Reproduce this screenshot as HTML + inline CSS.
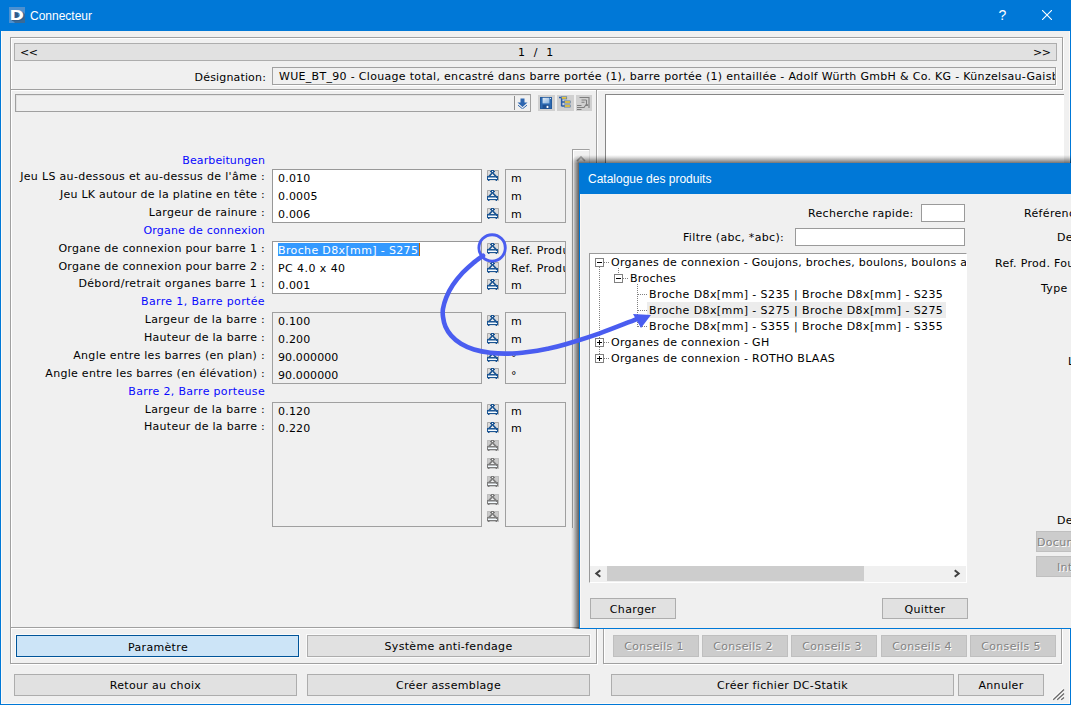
<!DOCTYPE html>
<html lang="fr"><head><meta charset="utf-8"><title>Connecteur</title>
<style>
html,body{margin:0;padding:0}
body{width:1071px;height:705px;overflow:hidden;position:relative;background:#f0f0f0;font-family:"DejaVu Sans","Liberation Sans",sans-serif;font-size:11px;color:#000}
div,span,svg{position:absolute;box-sizing:border-box}
.t{white-space:nowrap;line-height:14px;font-size:11px;letter-spacing:.33px}
.seg{font-family:"Liberation Sans",sans-serif;font-size:12px;line-height:16px;letter-spacing:0}
.blue{color:#0808ff}
.groove{border:1px solid #a0a0a0;box-shadow:1px 1px 0 #fff,inset 1px 1px 0 #fff}
.hline{height:2px;border-top:1px solid #a0a0a0;background:#fff}
.vline{width:2px;border-left:1px solid #a0a0a0;background:#fff}
.btn{background:#e1e1e1;border:1px solid #adadad}
.btnd{background:#cccccc;border:1px solid #bfbfbf}
.bt{white-space:nowrap;line-height:14px;font-size:11px;letter-spacing:.33px;left:0;right:0;text-align:center}
.dis{color:#838383;text-shadow:1px 1px 0 #fff}
.edit{background:#fff;border:1px solid #9a9a9a}
.box{background:#f0f0f0;border:1px solid #a0a0a0}
.ro{background:#f0f0f0;border:1px solid #a0a0a0}
</style></head><body>

<div style="left:0;top:0;width:1071px;height:31px;background:#0078d7"></div>
<div style="left:0;top:0;width:1px;height:705px;background:#0078d7"></div>
<div style="left:1070px;top:0;width:1px;height:705px;background:#0078d7"></div>
<div style="left:0;top:704px;width:1071px;height:1px;background:#0078d7"></div>
<div style="left:1px;top:703px;width:1069px;height:1px;background:#fdfaf7"></div>
<div style="left:1px;top:31px;width:1px;height:673px;background:#fdfaf7"></div>
<div style="left:1069px;top:31px;width:1px;height:673px;background:#fdfaf7"></div>
<svg style="left:9px;top:7px" width="16" height="16" viewBox="0 0 16 16"><rect width="16" height="16" fill="#4c90d0"/><path d="M3 13 L14 5 L16 7 V16 H6 Z" fill="#3a6a96"/><rect x="4.6" y="5.4" width="4.6" height="5.4" fill="#2b5a8a"/><text transform="translate(1.4 13.8) scale(1.27 1)" font-family="DejaVu Sans, sans-serif" font-weight="bold" font-size="13.7" fill="#2f5f8f">D</text><text transform="translate(.5 13) scale(1.27 1)" font-family="DejaVu Sans, sans-serif" font-weight="bold" font-size="13.7" fill="#fff">D</text></svg>
<span class="t seg" style="left:30px;top:8px;color:#fff">Connecteur</span>
<span class="t seg" style="left:998.5px;top:7px;color:#fff;font-size:14px">?</span>
<svg style="left:1042px;top:10px" width="10" height="10" viewBox="0 0 10 10"><path d="M0 0L10 10M10 0L0 10" stroke="#fff" stroke-width="1.1" fill="none"/></svg>
<div class="groove" style="left:10px;top:37px;width:1053px;height:53px"></div>
<div class="groove" style="left:10px;top:89px;width:587px;height:575px"></div>
<div class="hline" style="left:11px;top:627px;width:585px"></div>
<div class="groove" style="left:603px;top:628px;width:459px;height:36px;border-top:none"></div>
<div class="btn" style="left:14px;top:43px;width:1043px;height:18px"></div>
<span class="t " style="left:20px;top:46px;letter-spacing:-.5px">&lt;&lt;</span>
<span class="t " style="left:518px;top:46px;letter-spacing:.6px">1&nbsp; /&nbsp; 1</span>
<span class="t " style="left:1033px;top:46px;letter-spacing:-.5px">&gt;&gt;</span>
<span class="t " style="right:805px;top:71px;letter-spacing:.16px">Désignation:</span>
<div class="ro" style="left:272px;top:67px;width:784px;height:18px;overflow:hidden;box-shadow:1px 1px 0 #fff"><span class="t" style="left:6px;top:2px;letter-spacing:.31px">WUE_BT_90 - Clouage total, encastré dans barre portée (1), barre portée (1) entaillée - Adolf Würth GmbH &amp; Co. KG - Künzelsau-Gaisbach</span></div>
<div class="ro" style="left:15px;top:94px;width:516px;height:18px;box-shadow:inset 1px 1px 0 #e3e3e3"></div>
<div style="left:514px;top:96px;width:1px;height:14px;background:#8c8c8c"></div>
<svg style="left:517px;top:98px" width="11" height="11" viewBox="0 0 11 11"><path d="M3.5 0.5h4v4h3L5.5 9 0.5 4.5h3z" fill="#2d66b0"/><path d="M1 7.2L5.5 10.8 10 7.2" stroke="#2d66b0" stroke-width="1" fill="none"/></svg>
<div style="left:538px;top:95px;width:17px;height:16px;background:#d0d0d0"></div>
<div style="left:557px;top:95px;width:17px;height:16px;background:#d0d0d0"></div>
<div style="left:576px;top:95px;width:16px;height:16px;background:#d0d0d0"></div>
<svg style="left:540px;top:97px" width="12" height="12" viewBox="0 0 12 12"><defs><linearGradient id="sv" x1="0" y1="0" x2="1" y2="1"><stop offset="0" stop-color="#e4eef8"/><stop offset="1" stop-color="#86b0dc"/></linearGradient></defs><rect x=".5" y=".5" width="11" height="11" fill="#2d6ab2" stroke="#245a9c"/><rect x="2.6" y="0.8" width="6.8" height="5.6" fill="url(#sv)"/><rect x="10" y="1" width="1" height="1" fill="#dce8f4"/><rect x="2.6" y="7.8" width="6.8" height="4" fill="#1f4f90"/><rect x="6.6" y="8.8" width="1.8" height="2.2" fill="#fff"/></svg>
<svg style="left:558px;top:96px" width="14" height="13" viewBox="0 0 14 13"><path d="M1 1.6h2.5M3.6 2v8.2M3.6 6h3M3.6 10h3" stroke="#2a5ca8" stroke-width="1.5" fill="none"/><rect x="3.6" y="0.8" width="5.2" height="2.2" fill="#f2cc3c" stroke="#2a5ca8" stroke-width=".5"/><rect x="6.6" y="4.9" width="5.6" height="2.2" fill="#f2cc3c" stroke="#2a5ca8" stroke-width=".5"/><rect x="6.6" y="8.9" width="5.6" height="2.2" fill="#f2cc3c" stroke="#2a5ca8" stroke-width=".5"/></svg>
<svg style="left:576px;top:96px" width="15" height="15" viewBox="0 0 15 15"><path d="M3.5 1.5h9.5v10.5M5.5 4h5M5.5 6.2h3M10.5 4v6M1 9.5h4.5M1 11.5h4.5M1 13.5h4.5M5.5 11.5h2.5l2.5-3.5 1.5 1.5" stroke="#7e7e7e" stroke-width="1.1" fill="none"/></svg>
<div style="left:572px;top:149px;width:18px;height:379px;border:1px solid #a0a0a0;border-right-color:#dcdcdc;border-bottom:none;box-shadow:inset 1px 1px 0 #fff;background:#f0f0f0"></div>
<svg style="left:576px;top:155px" width="10" height="7" viewBox="0 0 10 7"><path d="M1 6L5 2 9 6" stroke="#a8a8a8" stroke-width="1.6" fill="none"/></svg>
<div style="left:605px;top:94px;width:459px;height:520px;background:#fff;border:1px solid #868686;border-right:none"></div>
<span class="t blue" style="right:806px;top:154px;letter-spacing:0.1px">Bearbeitungen</span>
<span class="t " style="right:806px;top:170px;letter-spacing:0.33px">Jeu LS au-dessous et au-dessus de l'âme :</span>
<span class="t " style="right:806px;top:188px;letter-spacing:0.255px">Jeu LK autour de la platine en tête :</span>
<span class="t " style="right:806px;top:206px;letter-spacing:0.33px">Largeur de rainure :</span>
<span class="t blue" style="right:806px;top:224px;letter-spacing:0.2px">Organe de connexion</span>
<span class="t " style="right:806px;top:242px;letter-spacing:0.29px">Organe de connexion pour barre 1 :</span>
<span class="t " style="right:806px;top:260px;letter-spacing:0.29px">Organe de connexion pour barre 2 :</span>
<span class="t " style="right:806px;top:277px;letter-spacing:0.33px">Débord/retrait organes barre 1 :</span>
<span class="t blue" style="right:806px;top:295px;letter-spacing:0.36px">Barre 1, Barre portée</span>
<span class="t " style="right:806px;top:313px;letter-spacing:0.357px">Largeur de la barre :</span>
<span class="t " style="right:806px;top:331px;letter-spacing:0.29px">Hauteur de la barre :</span>
<span class="t " style="right:806px;top:349px;letter-spacing:0.3px">Angle entre les barres (en plan) :</span>
<span class="t " style="right:806px;top:367px;letter-spacing:0.28px">Angle entre les barres (en élévation) :</span>
<span class="t blue" style="right:806px;top:385px;letter-spacing:0.33px">Barre 2, Barre porteuse</span>
<span class="t " style="right:806px;top:403px;letter-spacing:0.357px">Largeur de la barre :</span>
<span class="t " style="right:806px;top:420px;letter-spacing:0.29px">Hauteur de la barre :</span>
<div style="left:272px;top:169px;width:210px;height:54px;background:#fff;border:1px solid #989898"></div>
<div style="left:505px;top:169px;width:61px;height:54px;background:#f0f0f0;border:1px solid #a0a0a0;overflow:hidden"></div>
<span class="t " style="left:278px;top:172px;letter-spacing:0.19px">0.010</span>
<div style="left:506px;top:170px;width:59px;height:16px;overflow:hidden"><span class="t" style="left:5px;top:2px">m</span></div>
<svg class="ic" style="left:487px;top:170px" width="12" height="11" viewBox="0 0 12 11"><rect width="12" height="11" fill="#dcdcdc"/><path d="M.5 6.5V.5H11.5V10.5" stroke="#aaaaaa" fill="none"/><rect x="4" y="0" width="3" height="1" fill="#1b5593"/><rect x="3" y="1" width="5" height="1.1" fill="#1b5593"/><rect x="4.1" y="2" width="2.8" height="1.6" fill="#1b5593"/><rect x="5" y="1" width="1" height="1" fill="#f2f2f2"/><path d="M5 3.2 L2 6.4 M6 3.2 L9 6.4" fill="none" stroke="#1b5593" stroke-width="1.6"/><path d="M5.5 4.3 L3.9 6.1 H7.1 Z" fill="#f1f1f1"/><rect x="0" y="6" width="11" height="4" fill="#1b5593"/><path d="M1 9 V8 L1.2 7.9 2 6.8 2.8 7.9 3.2 7.9 4 6.8 4.8 7.9 5.2 7.9 6 6.8 6.8 7.9 7.2 7.9 8 6.8 8.8 7.9 10 8 V9 Z" fill="#f4fafe"/><rect x="1" y="10" width="1.5" height="1" fill="#1b5593"/><rect x="8.6" y="10" width="1.5" height="1" fill="#1b5593"/></svg>
<span class="t " style="left:278px;top:190px;letter-spacing:0.19px">0.0005</span>
<div style="left:506px;top:188px;width:59px;height:16px;overflow:hidden"><span class="t" style="left:5px;top:2px">m</span></div>
<svg class="ic" style="left:487px;top:190px" width="12" height="11" viewBox="0 0 12 11"><rect width="12" height="11" fill="#dcdcdc"/><path d="M.5 6.5V.5H11.5V10.5" stroke="#aaaaaa" fill="none"/><rect x="4" y="0" width="3" height="1" fill="#1b5593"/><rect x="3" y="1" width="5" height="1.1" fill="#1b5593"/><rect x="4.1" y="2" width="2.8" height="1.6" fill="#1b5593"/><rect x="5" y="1" width="1" height="1" fill="#f2f2f2"/><path d="M5 3.2 L2 6.4 M6 3.2 L9 6.4" fill="none" stroke="#1b5593" stroke-width="1.6"/><path d="M5.5 4.3 L3.9 6.1 H7.1 Z" fill="#f1f1f1"/><rect x="0" y="6" width="11" height="4" fill="#1b5593"/><path d="M1 9 V8 L1.2 7.9 2 6.8 2.8 7.9 3.2 7.9 4 6.8 4.8 7.9 5.2 7.9 6 6.8 6.8 7.9 7.2 7.9 8 6.8 8.8 7.9 10 8 V9 Z" fill="#f4fafe"/><rect x="1" y="10" width="1.5" height="1" fill="#1b5593"/><rect x="8.6" y="10" width="1.5" height="1" fill="#1b5593"/></svg>
<span class="t " style="left:278px;top:208px;letter-spacing:0.19px">0.006</span>
<div style="left:506px;top:206px;width:59px;height:16px;overflow:hidden"><span class="t" style="left:5px;top:2px">m</span></div>
<svg class="ic" style="left:487px;top:208px" width="12" height="11" viewBox="0 0 12 11"><rect width="12" height="11" fill="#dcdcdc"/><path d="M.5 6.5V.5H11.5V10.5" stroke="#aaaaaa" fill="none"/><rect x="4" y="0" width="3" height="1" fill="#1b5593"/><rect x="3" y="1" width="5" height="1.1" fill="#1b5593"/><rect x="4.1" y="2" width="2.8" height="1.6" fill="#1b5593"/><rect x="5" y="1" width="1" height="1" fill="#f2f2f2"/><path d="M5 3.2 L2 6.4 M6 3.2 L9 6.4" fill="none" stroke="#1b5593" stroke-width="1.6"/><path d="M5.5 4.3 L3.9 6.1 H7.1 Z" fill="#f1f1f1"/><rect x="0" y="6" width="11" height="4" fill="#1b5593"/><path d="M1 9 V8 L1.2 7.9 2 6.8 2.8 7.9 3.2 7.9 4 6.8 4.8 7.9 5.2 7.9 6 6.8 6.8 7.9 7.2 7.9 8 6.8 8.8 7.9 10 8 V9 Z" fill="#f4fafe"/><rect x="1" y="10" width="1.5" height="1" fill="#1b5593"/><rect x="8.6" y="10" width="1.5" height="1" fill="#1b5593"/></svg>
<div style="left:272px;top:241px;width:210px;height:53px;background:#fff;border:1px solid #989898"></div>
<div style="left:505px;top:241px;width:61px;height:53px;background:#f0f0f0;border:1px solid #a0a0a0;overflow:hidden"></div>
<div style="left:278px;top:243px;width:141px;height:13px;background:#3399ff"></div>
<span class="t " style="left:278px;top:244px;color:#fff;letter-spacing:.36px">Broche D8x[mm] - S275</span>
<div style="left:419px;top:243px;width:1px;height:13px;background:#c06000"></div>
<div style="left:506px;top:242px;width:59px;height:16px;overflow:hidden"><span class="t" style="left:5px;top:2px">Ref. Produit</span></div>
<svg class="ic" style="left:487px;top:243px" width="12" height="11" viewBox="0 0 12 11"><rect width="12" height="11" fill="#dcdcdc"/><path d="M.5 6.5V.5H11.5V10.5" stroke="#aaaaaa" fill="none"/><rect x="4" y="0" width="3" height="1" fill="#1b5593"/><rect x="3" y="1" width="5" height="1.1" fill="#1b5593"/><rect x="4.1" y="2" width="2.8" height="1.6" fill="#1b5593"/><rect x="5" y="1" width="1" height="1" fill="#f2f2f2"/><path d="M5 3.2 L2 6.4 M6 3.2 L9 6.4" fill="none" stroke="#1b5593" stroke-width="1.6"/><path d="M5.5 4.3 L3.9 6.1 H7.1 Z" fill="#f1f1f1"/><rect x="0" y="6" width="11" height="4" fill="#1b5593"/><path d="M1 9 V8 L1.2 7.9 2 6.8 2.8 7.9 3.2 7.9 4 6.8 4.8 7.9 5.2 7.9 6 6.8 6.8 7.9 7.2 7.9 8 6.8 8.8 7.9 10 8 V9 Z" fill="#f4fafe"/><rect x="1" y="10" width="1.5" height="1" fill="#1b5593"/><rect x="8.6" y="10" width="1.5" height="1" fill="#1b5593"/></svg>
<span class="t " style="left:278px;top:262px;letter-spacing:0.43px">PC 4.0 x 40</span>
<div style="left:506px;top:260px;width:59px;height:16px;overflow:hidden"><span class="t" style="left:5px;top:2px">Ref. Produit</span></div>
<svg class="ic" style="left:487px;top:262px" width="12" height="11" viewBox="0 0 12 11"><rect width="12" height="11" fill="#dcdcdc"/><path d="M.5 6.5V.5H11.5V10.5" stroke="#aaaaaa" fill="none"/><rect x="4" y="0" width="3" height="1" fill="#1b5593"/><rect x="3" y="1" width="5" height="1.1" fill="#1b5593"/><rect x="4.1" y="2" width="2.8" height="1.6" fill="#1b5593"/><rect x="5" y="1" width="1" height="1" fill="#f2f2f2"/><path d="M5 3.2 L2 6.4 M6 3.2 L9 6.4" fill="none" stroke="#1b5593" stroke-width="1.6"/><path d="M5.5 4.3 L3.9 6.1 H7.1 Z" fill="#f1f1f1"/><rect x="0" y="6" width="11" height="4" fill="#1b5593"/><path d="M1 9 V8 L1.2 7.9 2 6.8 2.8 7.9 3.2 7.9 4 6.8 4.8 7.9 5.2 7.9 6 6.8 6.8 7.9 7.2 7.9 8 6.8 8.8 7.9 10 8 V9 Z" fill="#f4fafe"/><rect x="1" y="10" width="1.5" height="1" fill="#1b5593"/><rect x="8.6" y="10" width="1.5" height="1" fill="#1b5593"/></svg>
<span class="t " style="left:278px;top:279px;letter-spacing:0.19px">0.001</span>
<div style="left:506px;top:277px;width:59px;height:16px;overflow:hidden"><span class="t" style="left:5px;top:2px">m</span></div>
<svg class="ic" style="left:487px;top:279px" width="12" height="11" viewBox="0 0 12 11"><rect width="12" height="11" fill="#dcdcdc"/><path d="M.5 6.5V.5H11.5V10.5" stroke="#aaaaaa" fill="none"/><rect x="4" y="0" width="3" height="1" fill="#1b5593"/><rect x="3" y="1" width="5" height="1.1" fill="#1b5593"/><rect x="4.1" y="2" width="2.8" height="1.6" fill="#1b5593"/><rect x="5" y="1" width="1" height="1" fill="#f2f2f2"/><path d="M5 3.2 L2 6.4 M6 3.2 L9 6.4" fill="none" stroke="#1b5593" stroke-width="1.6"/><path d="M5.5 4.3 L3.9 6.1 H7.1 Z" fill="#f1f1f1"/><rect x="0" y="6" width="11" height="4" fill="#1b5593"/><path d="M1 9 V8 L1.2 7.9 2 6.8 2.8 7.9 3.2 7.9 4 6.8 4.8 7.9 5.2 7.9 6 6.8 6.8 7.9 7.2 7.9 8 6.8 8.8 7.9 10 8 V9 Z" fill="#f4fafe"/><rect x="1" y="10" width="1.5" height="1" fill="#1b5593"/><rect x="8.6" y="10" width="1.5" height="1" fill="#1b5593"/></svg>
<div style="left:272px;top:312px;width:210px;height:72px;background:#f0f0f0;border:1px solid #a0a0a0"></div>
<div style="left:505px;top:312px;width:61px;height:72px;background:#f0f0f0;border:1px solid #a0a0a0;overflow:hidden"></div>
<span class="t " style="left:278px;top:315px;letter-spacing:0.19px">0.100</span>
<div style="left:506px;top:313px;width:59px;height:16px;overflow:hidden"><span class="t" style="left:5px;top:2px">m</span></div>
<svg class="ic" style="left:487px;top:315px" width="12" height="11" viewBox="0 0 12 11"><rect width="12" height="11" fill="#dcdcdc"/><path d="M.5 6.5V.5H11.5V10.5" stroke="#aaaaaa" fill="none"/><rect x="4" y="0" width="3" height="1" fill="#1b5593"/><rect x="3" y="1" width="5" height="1.1" fill="#1b5593"/><rect x="4.1" y="2" width="2.8" height="1.6" fill="#1b5593"/><rect x="5" y="1" width="1" height="1" fill="#f2f2f2"/><path d="M5 3.2 L2 6.4 M6 3.2 L9 6.4" fill="none" stroke="#1b5593" stroke-width="1.6"/><path d="M5.5 4.3 L3.9 6.1 H7.1 Z" fill="#f1f1f1"/><rect x="0" y="6" width="11" height="4" fill="#1b5593"/><path d="M1 9 V8 L1.2 7.9 2 6.8 2.8 7.9 3.2 7.9 4 6.8 4.8 7.9 5.2 7.9 6 6.8 6.8 7.9 7.2 7.9 8 6.8 8.8 7.9 10 8 V9 Z" fill="#f4fafe"/><rect x="1" y="10" width="1.5" height="1" fill="#1b5593"/><rect x="8.6" y="10" width="1.5" height="1" fill="#1b5593"/></svg>
<span class="t " style="left:278px;top:333px;letter-spacing:0.19px">0.200</span>
<div style="left:506px;top:331px;width:59px;height:16px;overflow:hidden"><span class="t" style="left:5px;top:2px">m</span></div>
<svg class="ic" style="left:487px;top:333px" width="12" height="11" viewBox="0 0 12 11"><rect width="12" height="11" fill="#dcdcdc"/><path d="M.5 6.5V.5H11.5V10.5" stroke="#aaaaaa" fill="none"/><rect x="4" y="0" width="3" height="1" fill="#1b5593"/><rect x="3" y="1" width="5" height="1.1" fill="#1b5593"/><rect x="4.1" y="2" width="2.8" height="1.6" fill="#1b5593"/><rect x="5" y="1" width="1" height="1" fill="#f2f2f2"/><path d="M5 3.2 L2 6.4 M6 3.2 L9 6.4" fill="none" stroke="#1b5593" stroke-width="1.6"/><path d="M5.5 4.3 L3.9 6.1 H7.1 Z" fill="#f1f1f1"/><rect x="0" y="6" width="11" height="4" fill="#1b5593"/><path d="M1 9 V8 L1.2 7.9 2 6.8 2.8 7.9 3.2 7.9 4 6.8 4.8 7.9 5.2 7.9 6 6.8 6.8 7.9 7.2 7.9 8 6.8 8.8 7.9 10 8 V9 Z" fill="#f4fafe"/><rect x="1" y="10" width="1.5" height="1" fill="#1b5593"/><rect x="8.6" y="10" width="1.5" height="1" fill="#1b5593"/></svg>
<span class="t " style="left:278px;top:351px;letter-spacing:0.11px">90.000000</span>
<div style="left:506px;top:349px;width:59px;height:16px;overflow:hidden"><span class="t" style="left:5px;top:2px">°</span></div>
<svg class="ic" style="left:487px;top:351px" width="12" height="11" viewBox="0 0 12 11"><rect width="12" height="11" fill="#dcdcdc"/><path d="M.5 6.5V.5H11.5V10.5" stroke="#aaaaaa" fill="none"/><rect x="4" y="0" width="3" height="1" fill="#1b5593"/><rect x="3" y="1" width="5" height="1.1" fill="#1b5593"/><rect x="4.1" y="2" width="2.8" height="1.6" fill="#1b5593"/><rect x="5" y="1" width="1" height="1" fill="#f2f2f2"/><path d="M5 3.2 L2 6.4 M6 3.2 L9 6.4" fill="none" stroke="#1b5593" stroke-width="1.6"/><path d="M5.5 4.3 L3.9 6.1 H7.1 Z" fill="#f1f1f1"/><rect x="0" y="6" width="11" height="4" fill="#1b5593"/><path d="M1 9 V8 L1.2 7.9 2 6.8 2.8 7.9 3.2 7.9 4 6.8 4.8 7.9 5.2 7.9 6 6.8 6.8 7.9 7.2 7.9 8 6.8 8.8 7.9 10 8 V9 Z" fill="#f4fafe"/><rect x="1" y="10" width="1.5" height="1" fill="#1b5593"/><rect x="8.6" y="10" width="1.5" height="1" fill="#1b5593"/></svg>
<span class="t " style="left:278px;top:369px;letter-spacing:0.11px">90.000000</span>
<div style="left:506px;top:367px;width:59px;height:16px;overflow:hidden"><span class="t" style="left:5px;top:2px">°</span></div>
<svg class="ic" style="left:487px;top:368px" width="12" height="11" viewBox="0 0 12 11"><rect width="12" height="11" fill="#dcdcdc"/><path d="M.5 6.5V.5H11.5V10.5" stroke="#aaaaaa" fill="none"/><rect x="4" y="0" width="3" height="1" fill="#1b5593"/><rect x="3" y="1" width="5" height="1.1" fill="#1b5593"/><rect x="4.1" y="2" width="2.8" height="1.6" fill="#1b5593"/><rect x="5" y="1" width="1" height="1" fill="#f2f2f2"/><path d="M5 3.2 L2 6.4 M6 3.2 L9 6.4" fill="none" stroke="#1b5593" stroke-width="1.6"/><path d="M5.5 4.3 L3.9 6.1 H7.1 Z" fill="#f1f1f1"/><rect x="0" y="6" width="11" height="4" fill="#1b5593"/><path d="M1 9 V8 L1.2 7.9 2 6.8 2.8 7.9 3.2 7.9 4 6.8 4.8 7.9 5.2 7.9 6 6.8 6.8 7.9 7.2 7.9 8 6.8 8.8 7.9 10 8 V9 Z" fill="#f4fafe"/><rect x="1" y="10" width="1.5" height="1" fill="#1b5593"/><rect x="8.6" y="10" width="1.5" height="1" fill="#1b5593"/></svg>
<div style="left:272px;top:402px;width:210px;height:125px;background:#f0f0f0;border:1px solid #a0a0a0"></div>
<div style="left:505px;top:402px;width:61px;height:125px;background:#f0f0f0;border:1px solid #a0a0a0;overflow:hidden"></div>
<span class="t " style="left:278px;top:405px;letter-spacing:0.19px">0.120</span>
<div style="left:506px;top:403px;width:59px;height:16px;overflow:hidden"><span class="t" style="left:5px;top:2px">m</span></div>
<svg class="ic" style="left:487px;top:404px" width="12" height="11" viewBox="0 0 12 11"><rect width="12" height="11" fill="#dcdcdc"/><path d="M.5 6.5V.5H11.5V10.5" stroke="#aaaaaa" fill="none"/><rect x="4" y="0" width="3" height="1" fill="#1b5593"/><rect x="3" y="1" width="5" height="1.1" fill="#1b5593"/><rect x="4.1" y="2" width="2.8" height="1.6" fill="#1b5593"/><rect x="5" y="1" width="1" height="1" fill="#f2f2f2"/><path d="M5 3.2 L2 6.4 M6 3.2 L9 6.4" fill="none" stroke="#1b5593" stroke-width="1.6"/><path d="M5.5 4.3 L3.9 6.1 H7.1 Z" fill="#f1f1f1"/><rect x="0" y="6" width="11" height="4" fill="#1b5593"/><path d="M1 9 V8 L1.2 7.9 2 6.8 2.8 7.9 3.2 7.9 4 6.8 4.8 7.9 5.2 7.9 6 6.8 6.8 7.9 7.2 7.9 8 6.8 8.8 7.9 10 8 V9 Z" fill="#f4fafe"/><rect x="1" y="10" width="1.5" height="1" fill="#1b5593"/><rect x="8.6" y="10" width="1.5" height="1" fill="#1b5593"/></svg>
<span class="t " style="left:278px;top:422px;letter-spacing:0.19px">0.220</span>
<div style="left:506px;top:420px;width:59px;height:16px;overflow:hidden"><span class="t" style="left:5px;top:2px">m</span></div>
<svg class="ic" style="left:487px;top:422px" width="12" height="11" viewBox="0 0 12 11"><rect width="12" height="11" fill="#dcdcdc"/><path d="M.5 6.5V.5H11.5V10.5" stroke="#aaaaaa" fill="none"/><rect x="4" y="0" width="3" height="1" fill="#1b5593"/><rect x="3" y="1" width="5" height="1.1" fill="#1b5593"/><rect x="4.1" y="2" width="2.8" height="1.6" fill="#1b5593"/><rect x="5" y="1" width="1" height="1" fill="#f2f2f2"/><path d="M5 3.2 L2 6.4 M6 3.2 L9 6.4" fill="none" stroke="#1b5593" stroke-width="1.6"/><path d="M5.5 4.3 L3.9 6.1 H7.1 Z" fill="#f1f1f1"/><rect x="0" y="6" width="11" height="4" fill="#1b5593"/><path d="M1 9 V8 L1.2 7.9 2 6.8 2.8 7.9 3.2 7.9 4 6.8 4.8 7.9 5.2 7.9 6 6.8 6.8 7.9 7.2 7.9 8 6.8 8.8 7.9 10 8 V9 Z" fill="#f4fafe"/><rect x="1" y="10" width="1.5" height="1" fill="#1b5593"/><rect x="8.6" y="10" width="1.5" height="1" fill="#1b5593"/></svg>
<svg class="ic" style="left:487px;top:440px" width="12" height="11" viewBox="0 0 12 11"><rect width="12" height="11" fill="#cacaca"/><path d="M.5 6.5V.5H11.5V10.5" stroke="#bcbcbc" fill="none"/><rect x="4" y="0" width="3" height="1" fill="#7c7c7c"/><rect x="3" y="1" width="5" height="1.1" fill="#7c7c7c"/><rect x="4.1" y="2" width="2.8" height="1.6" fill="#7c7c7c"/><rect x="5" y="1" width="1" height="1" fill="#f2f2f2"/><path d="M5 3.2 L2 6.4 M6 3.2 L9 6.4" fill="none" stroke="#7c7c7c" stroke-width="1.6"/><path d="M5.5 4.3 L3.9 6.1 H7.1 Z" fill="#f1f1f1"/><rect x="0" y="6" width="11" height="4" fill="#7c7c7c"/><path d="M1 9 V8 L1.2 7.9 2 6.8 2.8 7.9 3.2 7.9 4 6.8 4.8 7.9 5.2 7.9 6 6.8 6.8 7.9 7.2 7.9 8 6.8 8.8 7.9 10 8 V9 Z" fill="#f4fafe"/><rect x="1" y="10" width="1.5" height="1" fill="#7c7c7c"/><rect x="8.6" y="10" width="1.5" height="1" fill="#7c7c7c"/></svg>
<svg class="ic" style="left:487px;top:458px" width="12" height="11" viewBox="0 0 12 11"><rect width="12" height="11" fill="#cacaca"/><path d="M.5 6.5V.5H11.5V10.5" stroke="#bcbcbc" fill="none"/><rect x="4" y="0" width="3" height="1" fill="#7c7c7c"/><rect x="3" y="1" width="5" height="1.1" fill="#7c7c7c"/><rect x="4.1" y="2" width="2.8" height="1.6" fill="#7c7c7c"/><rect x="5" y="1" width="1" height="1" fill="#f2f2f2"/><path d="M5 3.2 L2 6.4 M6 3.2 L9 6.4" fill="none" stroke="#7c7c7c" stroke-width="1.6"/><path d="M5.5 4.3 L3.9 6.1 H7.1 Z" fill="#f1f1f1"/><rect x="0" y="6" width="11" height="4" fill="#7c7c7c"/><path d="M1 9 V8 L1.2 7.9 2 6.8 2.8 7.9 3.2 7.9 4 6.8 4.8 7.9 5.2 7.9 6 6.8 6.8 7.9 7.2 7.9 8 6.8 8.8 7.9 10 8 V9 Z" fill="#f4fafe"/><rect x="1" y="10" width="1.5" height="1" fill="#7c7c7c"/><rect x="8.6" y="10" width="1.5" height="1" fill="#7c7c7c"/></svg>
<svg class="ic" style="left:487px;top:476px" width="12" height="11" viewBox="0 0 12 11"><rect width="12" height="11" fill="#cacaca"/><path d="M.5 6.5V.5H11.5V10.5" stroke="#bcbcbc" fill="none"/><rect x="4" y="0" width="3" height="1" fill="#7c7c7c"/><rect x="3" y="1" width="5" height="1.1" fill="#7c7c7c"/><rect x="4.1" y="2" width="2.8" height="1.6" fill="#7c7c7c"/><rect x="5" y="1" width="1" height="1" fill="#f2f2f2"/><path d="M5 3.2 L2 6.4 M6 3.2 L9 6.4" fill="none" stroke="#7c7c7c" stroke-width="1.6"/><path d="M5.5 4.3 L3.9 6.1 H7.1 Z" fill="#f1f1f1"/><rect x="0" y="6" width="11" height="4" fill="#7c7c7c"/><path d="M1 9 V8 L1.2 7.9 2 6.8 2.8 7.9 3.2 7.9 4 6.8 4.8 7.9 5.2 7.9 6 6.8 6.8 7.9 7.2 7.9 8 6.8 8.8 7.9 10 8 V9 Z" fill="#f4fafe"/><rect x="1" y="10" width="1.5" height="1" fill="#7c7c7c"/><rect x="8.6" y="10" width="1.5" height="1" fill="#7c7c7c"/></svg>
<svg class="ic" style="left:487px;top:494px" width="12" height="11" viewBox="0 0 12 11"><rect width="12" height="11" fill="#cacaca"/><path d="M.5 6.5V.5H11.5V10.5" stroke="#bcbcbc" fill="none"/><rect x="4" y="0" width="3" height="1" fill="#7c7c7c"/><rect x="3" y="1" width="5" height="1.1" fill="#7c7c7c"/><rect x="4.1" y="2" width="2.8" height="1.6" fill="#7c7c7c"/><rect x="5" y="1" width="1" height="1" fill="#f2f2f2"/><path d="M5 3.2 L2 6.4 M6 3.2 L9 6.4" fill="none" stroke="#7c7c7c" stroke-width="1.6"/><path d="M5.5 4.3 L3.9 6.1 H7.1 Z" fill="#f1f1f1"/><rect x="0" y="6" width="11" height="4" fill="#7c7c7c"/><path d="M1 9 V8 L1.2 7.9 2 6.8 2.8 7.9 3.2 7.9 4 6.8 4.8 7.9 5.2 7.9 6 6.8 6.8 7.9 7.2 7.9 8 6.8 8.8 7.9 10 8 V9 Z" fill="#f4fafe"/><rect x="1" y="10" width="1.5" height="1" fill="#7c7c7c"/><rect x="8.6" y="10" width="1.5" height="1" fill="#7c7c7c"/></svg>
<svg class="ic" style="left:487px;top:511px" width="12" height="11" viewBox="0 0 12 11"><rect width="12" height="11" fill="#cacaca"/><path d="M.5 6.5V.5H11.5V10.5" stroke="#bcbcbc" fill="none"/><rect x="4" y="0" width="3" height="1" fill="#7c7c7c"/><rect x="3" y="1" width="5" height="1.1" fill="#7c7c7c"/><rect x="4.1" y="2" width="2.8" height="1.6" fill="#7c7c7c"/><rect x="5" y="1" width="1" height="1" fill="#f2f2f2"/><path d="M5 3.2 L2 6.4 M6 3.2 L9 6.4" fill="none" stroke="#7c7c7c" stroke-width="1.6"/><path d="M5.5 4.3 L3.9 6.1 H7.1 Z" fill="#f1f1f1"/><rect x="0" y="6" width="11" height="4" fill="#7c7c7c"/><path d="M1 9 V8 L1.2 7.9 2 6.8 2.8 7.9 3.2 7.9 4 6.8 4.8 7.9 5.2 7.9 6 6.8 6.8 7.9 7.2 7.9 8 6.8 8.8 7.9 10 8 V9 Z" fill="#f4fafe"/><rect x="1" y="10" width="1.5" height="1" fill="#7c7c7c"/><rect x="8.6" y="10" width="1.5" height="1" fill="#7c7c7c"/></svg>
<div style="left:16px;top:635px;width:283px;height:22px;background:#cce4f7;border:1px solid #005499;box-shadow:0 0 0 1px #fafafa"><span class="bt" style="top:5px;left:1px">Paramètre</span></div>
<div class="btn" style="left:307px;top:635px;width:283px;height:22px;box-shadow:0 0 0 1px #fafafa"><span class="bt" style="top:4px">Système anti-fendage</span></div>
<div class="btn" style="left:14px;top:674px;width:283px;height:22px"><span class="bt" style="top:4px">Retour au choix</span></div>
<div class="btn" style="left:307px;top:674px;width:283px;height:22px"><span class="bt" style="top:4px">Créer assemblage</span></div>
<div class="btn" style="left:611px;top:674px;width:343px;height:22px"><span class="bt" style="top:4px">Créer fichier DC-Statik</span></div>
<div class="btn" style="left:958px;top:674px;width:86px;height:22px"><span class="bt" style="top:4px">Annuler</span></div>
<div class="btnd" style="left:613px;top:635px;width:86px;height:22px"><span class="bt dis" style="top:4px;left:-4px">Conseils 1</span></div>
<div class="btnd" style="left:702px;top:635px;width:86px;height:22px"><span class="bt dis" style="top:4px;left:-4px">Conseils 2</span></div>
<div class="btnd" style="left:791px;top:635px;width:86px;height:22px"><span class="bt dis" style="top:4px;left:-4px">Conseils 3</span></div>
<div class="btnd" style="left:881px;top:635px;width:86px;height:22px"><span class="bt dis" style="top:4px;left:-4px">Conseils 4</span></div>
<div class="btnd" style="left:970px;top:635px;width:86px;height:22px"><span class="bt dis" style="top:4px;left:-4px">Conseils 5</span></div>
<svg style="left:1052px;top:688px" width="13" height="13" viewBox="0 0 13 13"><path d="M0.3 11.2L11.3 0.7M4.3 11.2L11.3 4.7M8.3 11.2L11.3 8.7" stroke="#fff" stroke-width="1.3" fill="none"/><path d="M1.2 11.8L12 1.5M5.2 11.8L12 5.5M9.2 11.8L12 9.5" stroke="#6a6a6a" stroke-width="1.3" fill="none"/></svg>
<div style="left:571px;top:163px;width:8px;height:466px;background:linear-gradient(90deg,rgba(0,0,0,0),rgba(0,0,0,.14) 30%,rgba(0,0,0,.6))"></div>
<div style="left:579px;top:155px;width:492px;height:8px;background:linear-gradient(180deg,rgba(0,0,0,0),rgba(0,0,0,.13) 30%,rgba(0,0,0,.54))"></div>
<div style="left:571px;top:155px;width:8px;height:8px;background:radial-gradient(circle 8px at 100% 100%,rgba(0,0,0,.56),rgba(0,0,0,.13) 70%,rgba(0,0,0,0) 100%)"></div>
<div id="pop" style="left:579px;top:163px;width:492px;height:466px;background:#f0f0f0;border:1px solid #0078d7;border-right:none;overflow:hidden">
<div style="left:0;top:0;width:492px;height:30px;background:#0078d7"></div>
<span class="t seg" style="left:8px;top:7px;color:#fff">Catalogue des produits</span>
<div style="left:0;top:30px;width:1px;height:434px;background:#fcf8f5"></div>
<span class="t " style="left:228px;top:43px;">Recherche rapide:</span>
<div class="edit" style="left:341px;top:40px;width:44px;height:18px"></div>
<span class="t " style="left:103px;top:67px;">Filtre (abc, *abc):</span>
<div class="edit" style="left:215px;top:64px;width:170px;height:18px"></div>
<span class="t " style="left:444px;top:43px;">Référence:</span>
<span class="t " style="left:477px;top:67px;">Description:</span>
<span class="t " style="left:415px;top:93px;">Ref. Prod. Fournisseur:</span>
<span class="t " style="left:461px;top:118px;">Type :</span>
<span class="t " style="left:488px;top:191px;">Longueur:</span>
<span class="t " style="left:477px;top:350px;">Description:</span>
<div class="btnd" style="left:456px;top:367px;width:90px;height:21px"><span class="t dis" style="left:0px;top:4px">Documentation</span></div>
<div class="btnd" style="left:456px;top:392px;width:90px;height:21px"><span class="t dis" style="left:20px;top:4px">Internet</span></div>
<div style="left:9px;top:89px;width:378px;height:330px;background:#fff;border:1px solid #9a9a9a;border-right:1px solid #fff;border-bottom:1px solid #fff;overflow:hidden">
<div style="left:57px;top:48px;width:299px;height:16px;background:#ececec"></div>
<span class="t" style="left:21px;top:2px;letter-spacing:0.27px">Organes de connexion - Goujons, broches, boulons, boulons ajustés</span>
<span class="t" style="left:40px;top:18px;letter-spacing:0.29px">Broches</span>
<span class="t" style="left:59px;top:34px;letter-spacing:0.4px">Broche D8x[mm] - S235 | Broche D8x[mm] - S235</span>
<span class="t" style="left:59px;top:50px;letter-spacing:0.4px">Broche D8x[mm] - S275 | Broche D8x[mm] - S275</span>
<span class="t" style="left:59px;top:66px;letter-spacing:0.4px">Broche D8x[mm] - S355 | Broche D8x[mm] - S355</span>
<span class="t" style="left:21px;top:82px;letter-spacing:0.29px">Organes de connexion - GH</span>
<span class="t" style="left:21px;top:98px;letter-spacing:0.29px">Organes de connexion - ROTHO BLAAS</span>
<div style="left:9px;top:13px;width:1px;height:91px;background:repeating-linear-gradient(180deg,#808080 0 1px,transparent 1px 2px)"></div>
<div style="left:14px;top:8px;width:5px;height:1px;background:repeating-linear-gradient(90deg,#808080 0 1px,transparent 1px 2px)"></div>
<div style="left:14px;top:88px;width:5px;height:1px;background:repeating-linear-gradient(90deg,#808080 0 1px,transparent 1px 2px)"></div>
<div style="left:14px;top:104px;width:5px;height:1px;background:repeating-linear-gradient(90deg,#808080 0 1px,transparent 1px 2px)"></div>
<div style="left:28px;top:14px;width:1px;height:6px;background:repeating-linear-gradient(180deg,#808080 0 1px,transparent 1px 2px)"></div>
<div style="left:33px;top:24px;width:5px;height:1px;background:repeating-linear-gradient(90deg,#808080 0 1px,transparent 1px 2px)"></div>
<div style="left:47px;top:30px;width:1px;height:43px;background:repeating-linear-gradient(180deg,#808080 0 1px,transparent 1px 2px)"></div>
<div style="left:48px;top:40px;width:9px;height:1px;background:repeating-linear-gradient(90deg,#808080 0 1px,transparent 1px 2px)"></div>
<div style="left:48px;top:56px;width:9px;height:1px;background:repeating-linear-gradient(90deg,#808080 0 1px,transparent 1px 2px)"></div>
<div style="left:48px;top:72px;width:9px;height:1px;background:repeating-linear-gradient(90deg,#808080 0 1px,transparent 1px 2px)"></div>
<svg style="left:5px;top:4px" width="9" height="9" viewBox="0 0 9 9"><rect x=".5" y=".5" width="8" height="8" fill="#fff" stroke="#808080"/><path d="M2 4.5h5" stroke="#000"/></svg>
<svg style="left:24px;top:20px" width="9" height="9" viewBox="0 0 9 9"><rect x=".5" y=".5" width="8" height="8" fill="#fff" stroke="#808080"/><path d="M2 4.5h5" stroke="#000"/></svg>
<svg style="left:5px;top:84px" width="9" height="9" viewBox="0 0 9 9"><rect x=".5" y=".5" width="8" height="8" fill="#fff" stroke="#808080"/><path d="M2 4.5h5" stroke="#000"/><path d="M4.5 2v5" stroke="#000"/></svg>
<svg style="left:5px;top:100px" width="9" height="9" viewBox="0 0 9 9"><rect x=".5" y=".5" width="8" height="8" fill="#fff" stroke="#808080"/><path d="M2 4.5h5" stroke="#000"/><path d="M4.5 2v5" stroke="#000"/></svg>
<div style="left:0px;top:312px;width:377px;height:16px;background:#f0f0f0"></div>
<div style="left:17px;top:312px;width:257px;height:15px;background:#cdcdcd"></div>
<svg style="left:4px;top:315px" width="8" height="9" viewBox="0 0 8 9"><path d="M6.3 1.3L2.3 4.5 6.3 7.7" stroke="#404040" stroke-width="2" fill="none"/></svg>
<svg style="left:363px;top:315px" width="8" height="9" viewBox="0 0 8 9"><path d="M1.7 1.3L5.7 4.5 1.7 7.7" stroke="#404040" stroke-width="2" fill="none"/></svg>
</div>
<div class="btn" style="left:10px;top:434px;width:86px;height:21px"><span class="bt" style="top:4px">Charger</span></div>
<div class="btn" style="left:302px;top:434px;width:86px;height:21px"><span class="bt" style="top:4px">Quitter</span></div>
</div>
<svg style="left:0;top:0" width="1071" height="705" viewBox="0 0 1071 705"><g fill="none" stroke="#4a5df0" stroke-linecap="round"><circle cx="492.1" cy="247.9" r="13.2" stroke-width="2.9"/><path d="M483.0 255.7C481.4 256.9 476.6 260.1 473.2 263.0C469.8 265.9 466.0 269.1 462.6 272.8C459.2 276.5 455.5 281.0 452.8 285.1C450.1 289.2 447.9 293.4 446.3 297.3C444.7 301.2 443.6 305.4 443.0 308.7C442.4 312.0 442.6 313.9 443.0 316.9C443.4 319.9 444.1 323.6 445.5 326.7C446.9 329.8 448.6 332.8 451.2 335.6C453.8 338.5 457.2 341.5 461.0 343.8C464.8 346.1 469.1 348.0 474.0 349.5C478.9 351.0 484.7 352.1 490.4 352.8C496.1 353.5 502.1 353.7 508.3 353.6C514.5 353.5 521.4 352.8 527.9 352.0C534.4 351.2 541.2 350.0 547.5 348.7C553.8 347.4 557.0 346.8 565.7 344.2C574.4 341.6 589.2 337.0 599.7 333.3C610.2 329.6 622.6 324.6 628.8 322.2C635.0 319.8 635.6 319.5 637.0 319.0" stroke-width="4.6"/></g><path d="M633 314 L651 315 L641 328 Z" fill="#4a5df0"/></svg>
</body></html>
